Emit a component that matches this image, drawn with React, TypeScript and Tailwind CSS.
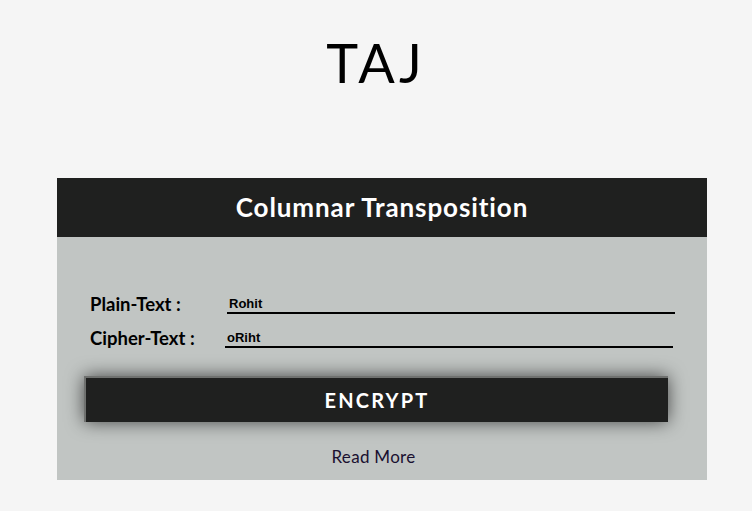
import React from 'react';

export default function App() {
    return (
        <div className="min-h-screen bg-[#f5f5f5] pt-[30px] font-['Lato',sans-serif]">
            <h1 className="text-center text-[54px] leading-[66px] font-normal tracking-[4px] text-black">TAJ</h1>

            <div className="ml-[57px] mt-[82px] w-[650px]">
                <div className="h-[59px] bg-[#1f201f] flex items-center justify-center">
                    <h2 className="text-[26px] font-bold text-white tracking-[0.9px]">Columnar Transposition</h2>
                </div>

                <div className="bg-[#c1c5c3] pt-[57px] pb-[11px]">
                    <div className="flex items-end pl-[33px]">
                        <label className="w-[137px] text-[18.5px] leading-[20px] font-bold text-black">Plain-Text :</label>
                        <input
                            readOnly
                            value="Rohit"
                            className="w-[448px] h-[18px] pl-[2px] bg-transparent border-b-2 border-black outline-none text-[13px] font-bold text-black font-['Liberation_Sans',Arial,sans-serif]"
                        />
                    </div>
                    <div className="flex items-end pl-[33px] mt-[14px]">
                        <label className="w-[135px] text-[18.5px] leading-[20px] font-bold text-black">Cipher-Text :</label>
                        <input
                            readOnly
                            value="oRiht"
                            className="w-[448px] h-[18px] pl-[2px] bg-transparent border-b-2 border-black outline-none text-[13px] font-bold text-black font-['Liberation_Sans',Arial,sans-serif]"
                        />
                    </div>

                    <button className="ml-[27px] mt-[28px] w-[584px] h-[46px] bg-[#1f201f] border-t-2 border-l-2 border-[#6f716f] shadow-[0_0_18px_rgba(0,0,0,0.65)] text-white text-[20px] font-bold tracking-[2.2px]">
                        ENCRYPT
                    </button>

                    <div className="mt-[23px] pr-[17px] text-center text-[17px] leading-[24px] font-normal tracking-[0.3px] text-[#1a1030]">
                        Read More
                    </div>
                </div>
            </div>
        </div>
    );
}
